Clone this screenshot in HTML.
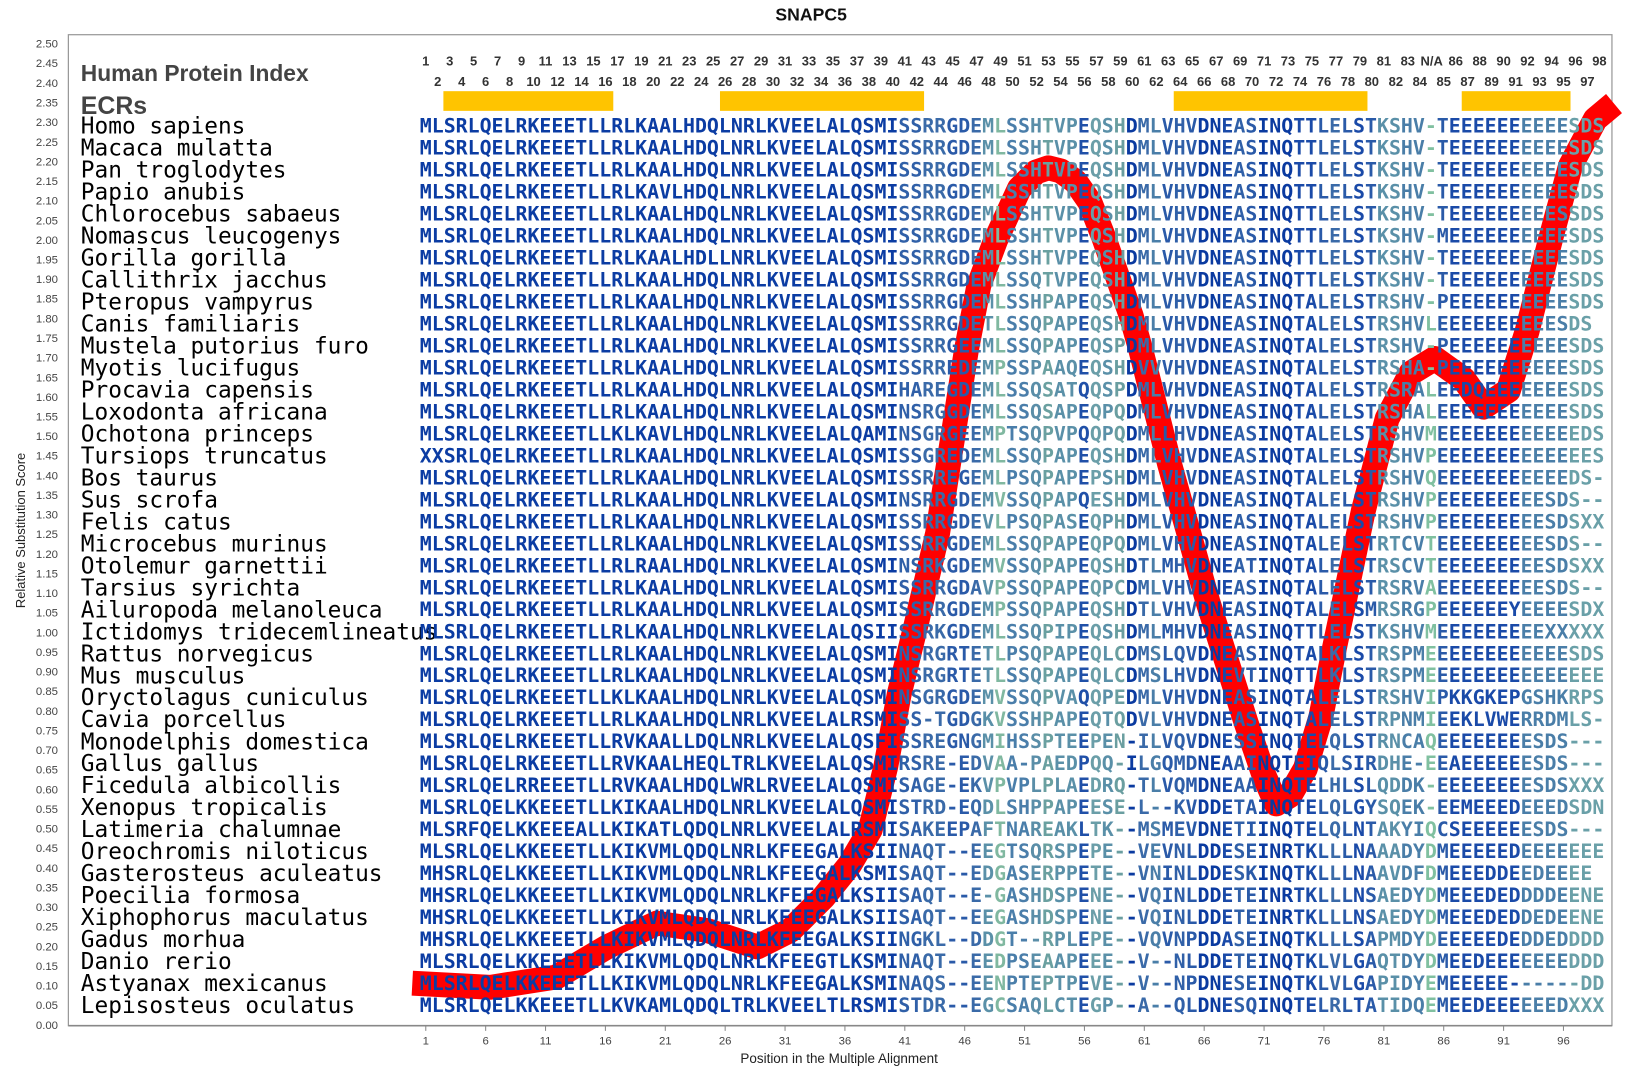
<!DOCTYPE html>
<html><head><meta charset="utf-8"><style>
html,body{margin:0;padding:0;background:#fff;}
svg{display:block;}
.yl{font-family:"Liberation Sans",sans-serif;font-size:11px;fill:#444;text-anchor:end;}
.xl{font-family:"Liberation Sans",sans-serif;font-size:11px;fill:#444;text-anchor:middle;}
.sp{font-family:"DejaVu Sans Mono","Liberation Mono",monospace;font-size:22px;fill:#000;}
.sq{font-family:"DejaVu Sans Mono","Liberation Mono",monospace;font-size:19.2px;font-weight:bold;fill:url(#cg);}
.ix{font-family:"Liberation Sans",sans-serif;font-size:12.5px;font-weight:bold;fill:#333;text-anchor:middle;}
</style></head><body>
<svg width="1625" height="1075" viewBox="0 0 1568.6 1037.6" preserveAspectRatio="none" xmlns="http://www.w3.org/2000/svg">
<defs>
<linearGradient id="cg" gradientUnits="userSpaceOnUse" x1="405.2" y1="0" x2="1549.6" y2="0">
<stop offset="0%" stop-color="#0b3ca3"/><stop offset="40.40%" stop-color="#0b3ca3"/>
<stop offset="40.40%" stop-color="#3060a8"/><stop offset="42.42%" stop-color="#3060a8"/>
<stop offset="42.42%" stop-color="#3a6aa8"/><stop offset="44.44%" stop-color="#3a6aa8"/>
<stop offset="44.44%" stop-color="#2a5aa8"/><stop offset="46.46%" stop-color="#2a5aa8"/>
<stop offset="46.46%" stop-color="#3a6aa8"/><stop offset="47.47%" stop-color="#3a6aa8"/>
<stop offset="47.47%" stop-color="#5a90a8"/><stop offset="48.48%" stop-color="#5a90a8"/>
<stop offset="48.48%" stop-color="#80b8a0"/><stop offset="49.49%" stop-color="#80b8a0"/>
<stop offset="49.49%" stop-color="#4a7eaa"/><stop offset="51.52%" stop-color="#4a7eaa"/>
<stop offset="51.52%" stop-color="#5a8ea8"/><stop offset="52.53%" stop-color="#5a8ea8"/>
<stop offset="52.53%" stop-color="#6aa0a0"/><stop offset="53.54%" stop-color="#6aa0a0"/>
<stop offset="53.54%" stop-color="#5a90a8"/><stop offset="55.56%" stop-color="#5a90a8"/>
<stop offset="55.56%" stop-color="#2050a8"/><stop offset="56.57%" stop-color="#2050a8"/>
<stop offset="56.57%" stop-color="#6a9ea8"/><stop offset="57.58%" stop-color="#6a9ea8"/>
<stop offset="57.58%" stop-color="#5a90a8"/><stop offset="58.59%" stop-color="#5a90a8"/>
<stop offset="58.59%" stop-color="#6a9ea0"/><stop offset="59.60%" stop-color="#6a9ea0"/>
<stop offset="59.60%" stop-color="#0a3aa0"/><stop offset="60.61%" stop-color="#0a3aa0"/>
<stop offset="60.61%" stop-color="#3a6aa8"/><stop offset="61.62%" stop-color="#3a6aa8"/>
<stop offset="61.62%" stop-color="#4a7ea8"/><stop offset="62.63%" stop-color="#4a7ea8"/>
<stop offset="62.63%" stop-color="#2a5aa8"/><stop offset="63.64%" stop-color="#2a5aa8"/>
<stop offset="63.64%" stop-color="#3060a8"/><stop offset="64.65%" stop-color="#3060a8"/>
<stop offset="64.65%" stop-color="#2a5aa8"/><stop offset="65.66%" stop-color="#2a5aa8"/>
<stop offset="65.66%" stop-color="#0a3aa0"/><stop offset="67.68%" stop-color="#0a3aa0"/>
<stop offset="67.68%" stop-color="#1a4aa8"/><stop offset="68.69%" stop-color="#1a4aa8"/>
<stop offset="68.69%" stop-color="#3060a8"/><stop offset="69.70%" stop-color="#3060a8"/>
<stop offset="69.70%" stop-color="#2a5aa8"/><stop offset="70.71%" stop-color="#2a5aa8"/>
<stop offset="70.71%" stop-color="#0a3aa0"/><stop offset="73.74%" stop-color="#0a3aa0"/>
<stop offset="73.74%" stop-color="#1a4aa8"/><stop offset="75.76%" stop-color="#1a4aa8"/>
<stop offset="75.76%" stop-color="#2a5aa8"/><stop offset="76.77%" stop-color="#2a5aa8"/>
<stop offset="76.77%" stop-color="#3a6aa8"/><stop offset="77.78%" stop-color="#3a6aa8"/>
<stop offset="77.78%" stop-color="#2a5aa8"/><stop offset="78.79%" stop-color="#2a5aa8"/>
<stop offset="78.79%" stop-color="#1a4aa8"/><stop offset="79.80%" stop-color="#1a4aa8"/>
<stop offset="79.80%" stop-color="#2a5aa8"/><stop offset="80.81%" stop-color="#2a5aa8"/>
<stop offset="80.81%" stop-color="#5a90a8"/><stop offset="82.83%" stop-color="#5a90a8"/>
<stop offset="82.83%" stop-color="#4a7ea8"/><stop offset="84.85%" stop-color="#4a7ea8"/>
<stop offset="84.85%" stop-color="#80c0a0"/><stop offset="85.86%" stop-color="#80c0a0"/>
<stop offset="85.86%" stop-color="#2a5aa8"/><stop offset="86.87%" stop-color="#2a5aa8"/>
<stop offset="86.87%" stop-color="#1a4aa8"/><stop offset="92.93%" stop-color="#1a4aa8"/>
<stop offset="92.93%" stop-color="#4a7ea8"/><stop offset="96.97%" stop-color="#4a7ea8"/>
<stop offset="96.97%" stop-color="#6aa0a8"/><stop offset="100%" stop-color="#6aa0a8"/>
</linearGradient>
</defs>

<text x="783" y="20" text-anchor="middle" font-family="Liberation Sans,sans-serif" font-size="17" font-weight="bold" fill="#111">SNAPC5</text>

<rect x="66" y="33.5" width="1490" height="956.5" fill="none" stroke="#999" stroke-width="1.2"/>
<line x1="66" y1="990" x2="1556" y2="990" stroke="#888" stroke-width="1.5"/>

<g class="yl">
<text x="56" y="993">0.00</text><text x="56" y="974.1">0.05</text><text x="56" y="955.1">0.10</text><text x="56" y="936.2">0.15</text><text x="56" y="917.2">0.20</text><text x="56" y="898.3">0.25</text><text x="56" y="879.4">0.30</text><text x="56" y="860.4">0.35</text><text x="56" y="841.5">0.40</text><text x="56" y="822.5">0.45</text><text x="56" y="803.6">0.50</text><text x="56" y="784.7">0.55</text><text x="56" y="765.7">0.60</text><text x="56" y="746.8">0.65</text><text x="56" y="727.8">0.70</text><text x="56" y="708.9">0.75</text><text x="56" y="690">0.80</text><text x="56" y="671">0.85</text><text x="56" y="652.1">0.90</text><text x="56" y="633.1">0.95</text><text x="56" y="614.2">1.00</text><text x="56" y="595.3">1.05</text><text x="56" y="576.3">1.10</text><text x="56" y="557.4">1.15</text><text x="56" y="538.4">1.20</text><text x="56" y="519.5">1.25</text><text x="56" y="500.6">1.30</text><text x="56" y="481.6">1.35</text><text x="56" y="462.7">1.40</text><text x="56" y="443.7">1.45</text><text x="56" y="424.8">1.50</text><text x="56" y="405.9">1.55</text><text x="56" y="386.9">1.60</text><text x="56" y="368">1.65</text><text x="56" y="349">1.70</text><text x="56" y="330.1">1.75</text><text x="56" y="311.2">1.80</text><text x="56" y="292.2">1.85</text><text x="56" y="273.3">1.90</text><text x="56" y="254.3">1.95</text><text x="56" y="235.4">2.00</text><text x="56" y="216.5">2.05</text><text x="56" y="197.5">2.10</text><text x="56" y="178.6">2.15</text><text x="56" y="159.6">2.20</text><text x="56" y="140.7">2.25</text><text x="56" y="121.8">2.30</text><text x="56" y="102.8">2.35</text><text x="56" y="83.9">2.40</text><text x="56" y="64.9">2.45</text><text x="56" y="46">2.50</text>
</g>
<text transform="translate(24,512) rotate(-90)" text-anchor="middle" font-family="Liberation Sans,sans-serif" font-size="12.5" fill="#222">Relative Substitution Score</text>

<g stroke="#888" stroke-width="1">
<line x1="411" y1="990" x2="411" y2="995"/><line x1="468.8" y1="990" x2="468.8" y2="995"/><line x1="526.6" y1="990" x2="526.6" y2="995"/><line x1="584.4" y1="990" x2="584.4" y2="995"/><line x1="642.2" y1="990" x2="642.2" y2="995"/><line x1="700" y1="990" x2="700" y2="995"/><line x1="757.8" y1="990" x2="757.8" y2="995"/><line x1="815.6" y1="990" x2="815.6" y2="995"/><line x1="873.4" y1="990" x2="873.4" y2="995"/><line x1="931.2" y1="990" x2="931.2" y2="995"/><line x1="989" y1="990" x2="989" y2="995"/><line x1="1046.8" y1="990" x2="1046.8" y2="995"/><line x1="1104.6" y1="990" x2="1104.6" y2="995"/><line x1="1162.4" y1="990" x2="1162.4" y2="995"/><line x1="1220.2" y1="990" x2="1220.2" y2="995"/><line x1="1278" y1="990" x2="1278" y2="995"/><line x1="1335.8" y1="990" x2="1335.8" y2="995"/><line x1="1393.6" y1="990" x2="1393.6" y2="995"/><line x1="1451.4" y1="990" x2="1451.4" y2="995"/><line x1="1509.2" y1="990" x2="1509.2" y2="995"/>
</g>
<g class="xl">
<text x="411" y="1008">1</text><text x="468.8" y="1008">6</text><text x="526.6" y="1008">11</text><text x="584.4" y="1008">16</text><text x="642.2" y="1008">21</text><text x="700" y="1008">26</text><text x="757.8" y="1008">31</text><text x="815.6" y="1008">36</text><text x="873.4" y="1008">41</text><text x="931.2" y="1008">46</text><text x="989" y="1008">51</text><text x="1046.8" y="1008">56</text><text x="1104.6" y="1008">61</text><text x="1162.4" y="1008">66</text><text x="1220.2" y="1008">71</text><text x="1278" y="1008">76</text><text x="1335.8" y="1008">81</text><text x="1393.6" y="1008">86</text><text x="1451.4" y="1008">91</text><text x="1509.2" y="1008">96</text>
</g>
<text x="810" y="1026" text-anchor="middle" font-family="Liberation Sans,sans-serif" font-size="13" fill="#222">Position in the Multiple Alignment</text>

<text x="78" y="78" font-family="Liberation Sans,sans-serif" font-size="22" font-weight="bold" fill="#444">Human Protein Index</text>
<text x="78" y="110" font-family="Liberation Sans,sans-serif" font-size="24" font-weight="bold" fill="#444">ECRs</text>

<g class="ix">
<text x="411" y="63">1</text><text x="434.1" y="63">3</text><text x="457.2" y="63">5</text><text x="480.4" y="63">7</text><text x="503.5" y="63">9</text><text x="526.6" y="63">11</text><text x="549.7" y="63">13</text><text x="572.8" y="63">15</text><text x="596" y="63">17</text><text x="619.1" y="63">19</text><text x="642.2" y="63">21</text><text x="665.3" y="63">23</text><text x="688.4" y="63">25</text><text x="711.6" y="63">27</text><text x="734.7" y="63">29</text><text x="757.8" y="63">31</text><text x="780.9" y="63">33</text><text x="804" y="63">35</text><text x="827.2" y="63">37</text><text x="850.3" y="63">39</text><text x="873.4" y="63">41</text><text x="896.5" y="63">43</text><text x="919.6" y="63">45</text><text x="942.8" y="63">47</text><text x="965.9" y="63">49</text><text x="989" y="63">51</text><text x="1012.1" y="63">53</text><text x="1035.2" y="63">55</text><text x="1058.4" y="63">57</text><text x="1081.5" y="63">59</text><text x="1104.6" y="63">61</text><text x="1127.7" y="63">63</text><text x="1150.8" y="63">65</text><text x="1174" y="63">67</text><text x="1197.1" y="63">69</text><text x="1220.2" y="63">71</text><text x="1243.3" y="63">73</text><text x="1266.4" y="63">75</text><text x="1289.6" y="63">77</text><text x="1312.7" y="63">79</text><text x="1335.8" y="63">81</text><text x="1358.9" y="63">83</text><text x="1382" y="63">N/A</text><text x="1405.2" y="63">86</text><text x="1428.3" y="63">88</text><text x="1451.4" y="63">90</text><text x="1474.5" y="63">92</text><text x="1497.6" y="63">94</text><text x="1520.8" y="63">96</text><text x="1543.9" y="63">98</text>
<text x="422.6" y="83">2</text><text x="445.7" y="83">4</text><text x="468.8" y="83">6</text><text x="491.9" y="83">8</text><text x="515" y="83">10</text><text x="538.2" y="83">12</text><text x="561.3" y="83">14</text><text x="584.4" y="83">16</text><text x="607.5" y="83">18</text><text x="630.6" y="83">20</text><text x="653.8" y="83">22</text><text x="676.9" y="83">24</text><text x="700" y="83">26</text><text x="723.1" y="83">28</text><text x="746.2" y="83">30</text><text x="769.4" y="83">32</text><text x="792.5" y="83">34</text><text x="815.6" y="83">36</text><text x="838.7" y="83">38</text><text x="861.8" y="83">40</text><text x="885" y="83">42</text><text x="908.1" y="83">44</text><text x="931.2" y="83">46</text><text x="954.3" y="83">48</text><text x="977.4" y="83">50</text><text x="1000.6" y="83">52</text><text x="1023.7" y="83">54</text><text x="1046.8" y="83">56</text><text x="1069.9" y="83">58</text><text x="1093" y="83">60</text><text x="1116.2" y="83">62</text><text x="1139.3" y="83">64</text><text x="1162.4" y="83">66</text><text x="1185.5" y="83">68</text><text x="1208.6" y="83">70</text><text x="1231.8" y="83">72</text><text x="1254.9" y="83">74</text><text x="1278" y="83">76</text><text x="1301.1" y="83">78</text><text x="1324.2" y="83">80</text><text x="1347.4" y="83">82</text><text x="1370.5" y="83">84</text><text x="1393.6" y="83">85</text><text x="1416.7" y="83">87</text><text x="1439.8" y="83">89</text><text x="1463" y="83">91</text><text x="1486.1" y="83">93</text><text x="1509.2" y="83">95</text><text x="1532.3" y="83">97</text>
</g>

<g fill="#ffc400">
<rect x="428" y="88" width="164" height="19"/>
<rect x="695" y="88" width="197" height="19"/>
<rect x="1133" y="88" width="187" height="19"/>
<rect x="1411" y="88" width="105" height="19"/>
</g>

<path d="M398,949 L473,953 L537,943 L586,914 L634,891 L682,898 L731,914 L763,898 L795,866 L820,835 L840,801 L855,740 L868,670 L885,600 L905,515 L920,420 L933,337 L945,275 L961,232 L984,182 L1000,166 L1012,162 L1024,165 L1038,175 L1052,195 L1065,228 L1078,265 L1092,305 L1101,337 L1129,448 L1166,581 L1203,698 L1220,748 L1232,776 L1245,768 L1260,742 L1275,692 L1288,626 L1316,493 L1339,404 L1362,360 L1385,346 L1413,366 L1432,393 L1456,377 L1474,320 L1498,226 L1516,160 L1540,115 L1558,100" fill="none" stroke="#ff0000" stroke-width="24" stroke-linejoin="round"/>

<g class="sp">
<text x="78" y="129">Homo sapiens</text>
<text x="78" y="150.2">Macaca mulatta</text>
<text x="78" y="171.4">Pan troglodytes</text>
<text x="78" y="192.7">Papio anubis</text>
<text x="78" y="213.9">Chlorocebus sabaeus</text>
<text x="78" y="235.1">Nomascus leucogenys</text>
<text x="78" y="256.3">Gorilla gorilla</text>
<text x="78" y="277.5">Callithrix jacchus</text>
<text x="78" y="298.8">Pteropus vampyrus</text>
<text x="78" y="320">Canis familiaris</text>
<text x="78" y="341.2">Mustela putorius furo</text>
<text x="78" y="362.4">Myotis lucifugus</text>
<text x="78" y="383.6">Procavia capensis</text>
<text x="78" y="404.9">Loxodonta africana</text>
<text x="78" y="426.1">Ochotona princeps</text>
<text x="78" y="447.3">Tursiops truncatus</text>
<text x="78" y="468.5">Bos taurus</text>
<text x="78" y="489.7">Sus scrofa</text>
<text x="78" y="511">Felis catus</text>
<text x="78" y="532.2">Microcebus murinus</text>
<text x="78" y="553.4">Otolemur garnettii</text>
<text x="78" y="574.6">Tarsius syrichta</text>
<text x="78" y="595.8">Ailuropoda melanoleuca</text>
<text x="78" y="617.1">Ictidomys tridecemlineatus</text>
<text x="78" y="638.3">Rattus norvegicus</text>
<text x="78" y="659.5">Mus musculus</text>
<text x="78" y="680.7">Oryctolagus cuniculus</text>
<text x="78" y="701.9">Cavia porcellus</text>
<text x="78" y="723.2">Monodelphis domestica</text>
<text x="78" y="744.4">Gallus gallus</text>
<text x="78" y="765.6">Ficedula albicollis</text>
<text x="78" y="786.8">Xenopus tropicalis</text>
<text x="78" y="808">Latimeria chalumnae</text>
<text x="78" y="829.3">Oreochromis niloticus</text>
<text x="78" y="850.5">Gasterosteus aculeatus</text>
<text x="78" y="871.7">Poecilia formosa</text>
<text x="78" y="892.9">Xiphophorus maculatus</text>
<text x="78" y="914.1">Gadus morhua</text>
<text x="78" y="935.4">Danio rerio</text>
<text x="78" y="956.6">Astyanax mexicanus</text>
<text x="78" y="977.8">Lepisosteus oculatus</text>
</g>

<g class="sq">
<text x="405.2" y="128">MLSRLQELRKEEETLLRLKAALHDQLNRLKVEELALQSMISSRRGDEMLSSHTVPEQSHDMLVHVDNEASINQTTLELSTKSHV-TEEEEEEEEEESDS</text>
<text x="405.2" y="149.2">MLSRLQELRKEEETLLRLKAALHDQLNRLKVEELALQSMISSRRGDEMLSSHTVPEQSHDMLVHVDNEASINQTTLELSTKSHV-TEEEEEEEEEESDS</text>
<text x="405.2" y="170.4">MLSRLQELRKEEETLLRLKAALHDQLNRLKVEELALQSMISSRRGDEMLSSHTVPEQSHDMLVHVDNEASINQTTLELSTKSHV-TEEEEEEEEEESDS</text>
<text x="405.2" y="191.7">MLSRLQELRKEEETLLRLKAVLHDQLNRLKVEELALQSMISSRRGDEMLSSHTVPEQSHDMLVHVDNEASINQTTLELSTKSHV-TEEEEEEEEEESDS</text>
<text x="405.2" y="212.9">MLSRLQELRKEEETLLRLKAALHDQLNRLKVEELALQSMISSRRGDEMLSSHTVPEQSHDMLVHVDNEASINQTTLELSTKSHV-TEEEEEEEEESSDS</text>
<text x="405.2" y="234.1">MLSRLQELRKEEETLLRLKAALHDQLNRLKVEELALQSMISSRRGDEMLSSHTVPEQSHDMLVHVDNEASINQTTLELSTKSHV-MEEEEEEEEEESDS</text>
<text x="405.2" y="255.3">MLSRLQELRKEEETLLRLKAALHDLLNRLKVEELALQSMISSRRGDEMLSSHTVPEQSHDMLVHVDNEASINQTTLELSTKSHV-TEEEEEEEEEESDS</text>
<text x="405.2" y="276.5">MLSRLQELRKEEETLLRLKAALHDQLNRLKVEELALQSMISSRRGDEMLSSQTVPEQSHDMLVHVDNEASINQTTLELSTKSHV-TEEEEEEEEEESDS</text>
<text x="405.2" y="297.8">MLSRLQELRKEEETLLRLKAALHDQLNRLKVEELALQSMISSRRGDEMLSSHPAPEQSHDMLVHVDNEASINQTALELSTRSHV-PEEEEEEEEEESDS</text>
<text x="405.2" y="319">MLSRLQELRKEEETLLRLKAALHDQLNRLKVEELALQSMISSRRGDETLSSQPAPEQSHDMLVHVDNEASINQTALELSTRSHVLEEEEEEEEEESDS</text>
<text x="405.2" y="340.2">MLSRLQELRKEEETLLRLKAALHDQLNRLKVEELALQSMISSRRGEEMLSSQPAPEQSPDMLVHVDNEASINQTALELSTRSHV-PEEEEEEEEEESDS</text>
<text x="405.2" y="361.4">MLSRLQELRKEEETLLRLKAALHDQLNRLKVEELALQSMISSRREDEMPSSPAAQEQSHDVVVHVDNEASINQTALELSTRSHA-PEEEEEEEEEESDS</text>
<text x="405.2" y="382.6">MLSRLQELRKEEETLLRLKAALHDQLNRLKVEELALQSMIHAREGDEMLSSQSATQQSPDMLVHVDNEASINQTALELSTRSRALEEDQEEEEEEESDS</text>
<text x="405.2" y="403.9">MLSRLQELRKEEETLLRLKAALHDQLNRLKVEELALQSMINSRGGDEMLSSQSAPEQPQDMLVHVDNEASINQTALELSTRSHALEEEEEEEEEEESDS</text>
<text x="405.2" y="425.1">MLSRLQELRKEEETLLKLKAVLHDQLNRLKVEELALQAMINSGRGEEMPTSQPVPQQPQDMLLHVDNEASINQTALELSTRSHVMEEEEEEEEEEEEDS</text>
<text x="405.2" y="446.3">XXSRLQELRKEEETLLRLKAALHDQLNRLKVEELALQSMISSGREDEMLSSQPAPEQSHDMLVHVDNEASINQTALELSTRSHVPEEEEEEEEEEEEES</text>
<text x="405.2" y="467.5">MLSRLQELRKEEETLLRLKAALHDQLNRLKVEELALQSMISSRREGEMLPSQPAPEPSHDMLVHVDNEASINQTALELSTRSHVQEEEEEEEEEEEDS-</text>
<text x="405.2" y="488.7">MLSRLQELRKEEETLLRLKAALHDQLNRLKVEELALQSMINSRRGDEMVSSQPAPQESHDMLVHVDNEASINQTALELSTRSHVPEEEEEEEEESDS--</text>
<text x="405.2" y="510">MLSRLQELRKEEETLLRLKAALHDQLNRLKVEELALQSMISSRRGDEVLPSQPASEQPHDMLVHVDNEASINQTALELSTRSHVPEEEEEEEEESDSXX</text>
<text x="405.2" y="531.2">MLSRLQELRKEEETLLRLKAALHDQLNRLKVEELALQSMISSRRGDEMLSSQPAPEQPQDMLVHVDNEASINQTALELSTRTCVTEEEEEEEEESDS--</text>
<text x="405.2" y="552.4">MLSRLQELRKEEETLLRLRAALHDQLNRLKVEELALQSMINSRKGDEMVSSQPAPEQSHDTLMHVDNEATINQTALELSTRSCVTEEEEEEEEESDSXX</text>
<text x="405.2" y="573.6">MLSRLQELRKEEETLLRLKAALHDQLNRLKVEELALQSMISSRRGDAVPSSQPAPEQPCDMLVHVDNEASINQTALELSTRSRVAEEEEEEEEESDS--</text>
<text x="405.2" y="594.8">MLSRLQELRKEEETLLRLKAALHDQLNRLKVEELALQSMISSRRGDEMPSSQPAPEQSHDTLVHVDNEASINQTALELSMRSRGPEEEEEEYEEEESDX</text>
<text x="405.2" y="616.1">MLSRLQELRKEEETLLRLKAALHDQLNRLKVEELALQSIISSRKGDEMLSSQPIPEQSHDMLMHVDNEASINQTTLELSTKSHVMEEEEEEEEEXXXXX</text>
<text x="405.2" y="637.3">MLSRLQELRKEEETLLRLKAALHDQLNRLKVEELALQSMINSRGRTETLPSQPAPEQLCDMSLQVDNEASINQTALKLSTRSPMEEEEEEEEEEEESDS</text>
<text x="405.2" y="658.5">MLSRLQELRKEEETLLRLKAALHDQLNRLKVEELALQSMINSRGRTETLSSQPAPEQLCDMSLHVDNEVTINQTTLKLSTRSPMEEEEEEEEEEEEEEE</text>
<text x="405.2" y="679.7">MLSRLQELRKEEETLLKLKAALHDQLNRLKVEELALQSMINSGRGDEMVSSQPVAQQPEDMLVHVDNEASINQTALELSTRSHVIPKKGKEPGSHKRPS</text>
<text x="405.2" y="700.9">MLSRLQELRKEEETLLRLKAALHDQLNRLKVEELALRSMISS-TGDGKVSSHPAPEQTQDVLVHVDNEASINQTALELSTRPNMIEEKLVWERRDMLS-</text>
<text x="405.2" y="722.2">MLSRLQELRKEEETLLRVKAALLDQLNRLKVEELALQSFISSREGNGMIHSSPTEEPEN-ILVQVDNESSINQTELQLSTRNCAQEEEEEEEESDS---</text>
<text x="405.2" y="743.4">MLSRLQELRKEEETLLRVKAALHEQLTRLKVEELALQSMIRSRE-EDVAA-PAEDPQQ-ILGQMDNEAAINQTEIQLSIRDHE-EEAEEEEEESDS---</text>
<text x="405.2" y="764.6">MLSRLQELRREEETLLRVKAALHDQLWRLRVEELALQSMISAGE-EKVPVPLPLAEDRQ-TLVQMDNEAAINQTELHLSLQDDK-EEEEEEEESDSXXX</text>
<text x="405.2" y="785.8">MLSRLQELKKEEETLLKIKAALHDQLNRLKVEELALQSMISTRD-EQDLSHPPAPEESE-L--KVDDETAINQTELQLGYSQEK-EEMEEEDEEEDSDN</text>
<text x="405.2" y="807">MLSRFQELKKEEEALLKIKATLQDQLNRLKVEELALRSMISAKEEPAFTNAREAKLTK--MSMEVDNETIINQTELQLNTAKYIQCSEEEEEESDS---</text>
<text x="405.2" y="828.3">MLSRLQELKKEEETLLKIKVMLQDQLNRLKFEEGALKSIINAQT--EEGTSQRSPEPE--VEVNLDDESEINRTKLLLNAAADYDMEEEEEDEEEEEEE</text>
<text x="405.2" y="849.5">MHSRLQELKKEEETLLKIKVMLQDQLNRLKFEEGALKSMISAQT--EDGASERPPETE--VNINLDDESKINQTKLLLNAAVDFDMEEEDDEEDEEEE</text>
<text x="405.2" y="870.7">MHSRLQELKKEEETLLKIKVMLQDQLNRLKFEEGALKSIISAQT--E-GASHDSPENE--VQINLDDETEINRTKLLLNSAEDYDMEEEDEDDDDEENE</text>
<text x="405.2" y="891.9">MHSRLQELKKEEETLLKIKVMLQDQLNRLKFEEGALKSIISAQT--EEGASHDSPENE--VQINLDDETEINRTKLLLNSAEDYDMEEEDEDDEDEENE</text>
<text x="405.2" y="913.1">MHSRLQELKKEEETLLKIKVMLQDQLNRLKFEEGALKSIINGKL--DDGT--RPLEPE--VQVNPDDASEINQTKLLLSAPMDYDEEEEEDEDDEDDDD</text>
<text x="405.2" y="934.4">MLSRLQELKKEEETLLKIKVMLQDQLNRLKFEEGTLKSMINAQT--EEDPSEAAPEEE--V--NLDDETEINQTKLVLGAQTDYDMEEDEEEEEEEDDD</text>
<text x="405.2" y="955.6">MLSRLQELKKEEETLLKIKVMLQDQLNRLKFEEGALKSMINAQS--EENPTEPTPEVE--V--NPDNESEINQTKLVLGAPIDYEMEEEEE------DD</text>
<text x="405.2" y="976.8">MLSRLQELKKEEETLLKVKAMLQDQLTRLKVEELTLRSMISTDR--EGCSAQLCTEGP--A--QLDNESQINQTELRLTATIDQEMEEDEEEEEEDXXX</text>
</g>
</svg>
</body></html>
